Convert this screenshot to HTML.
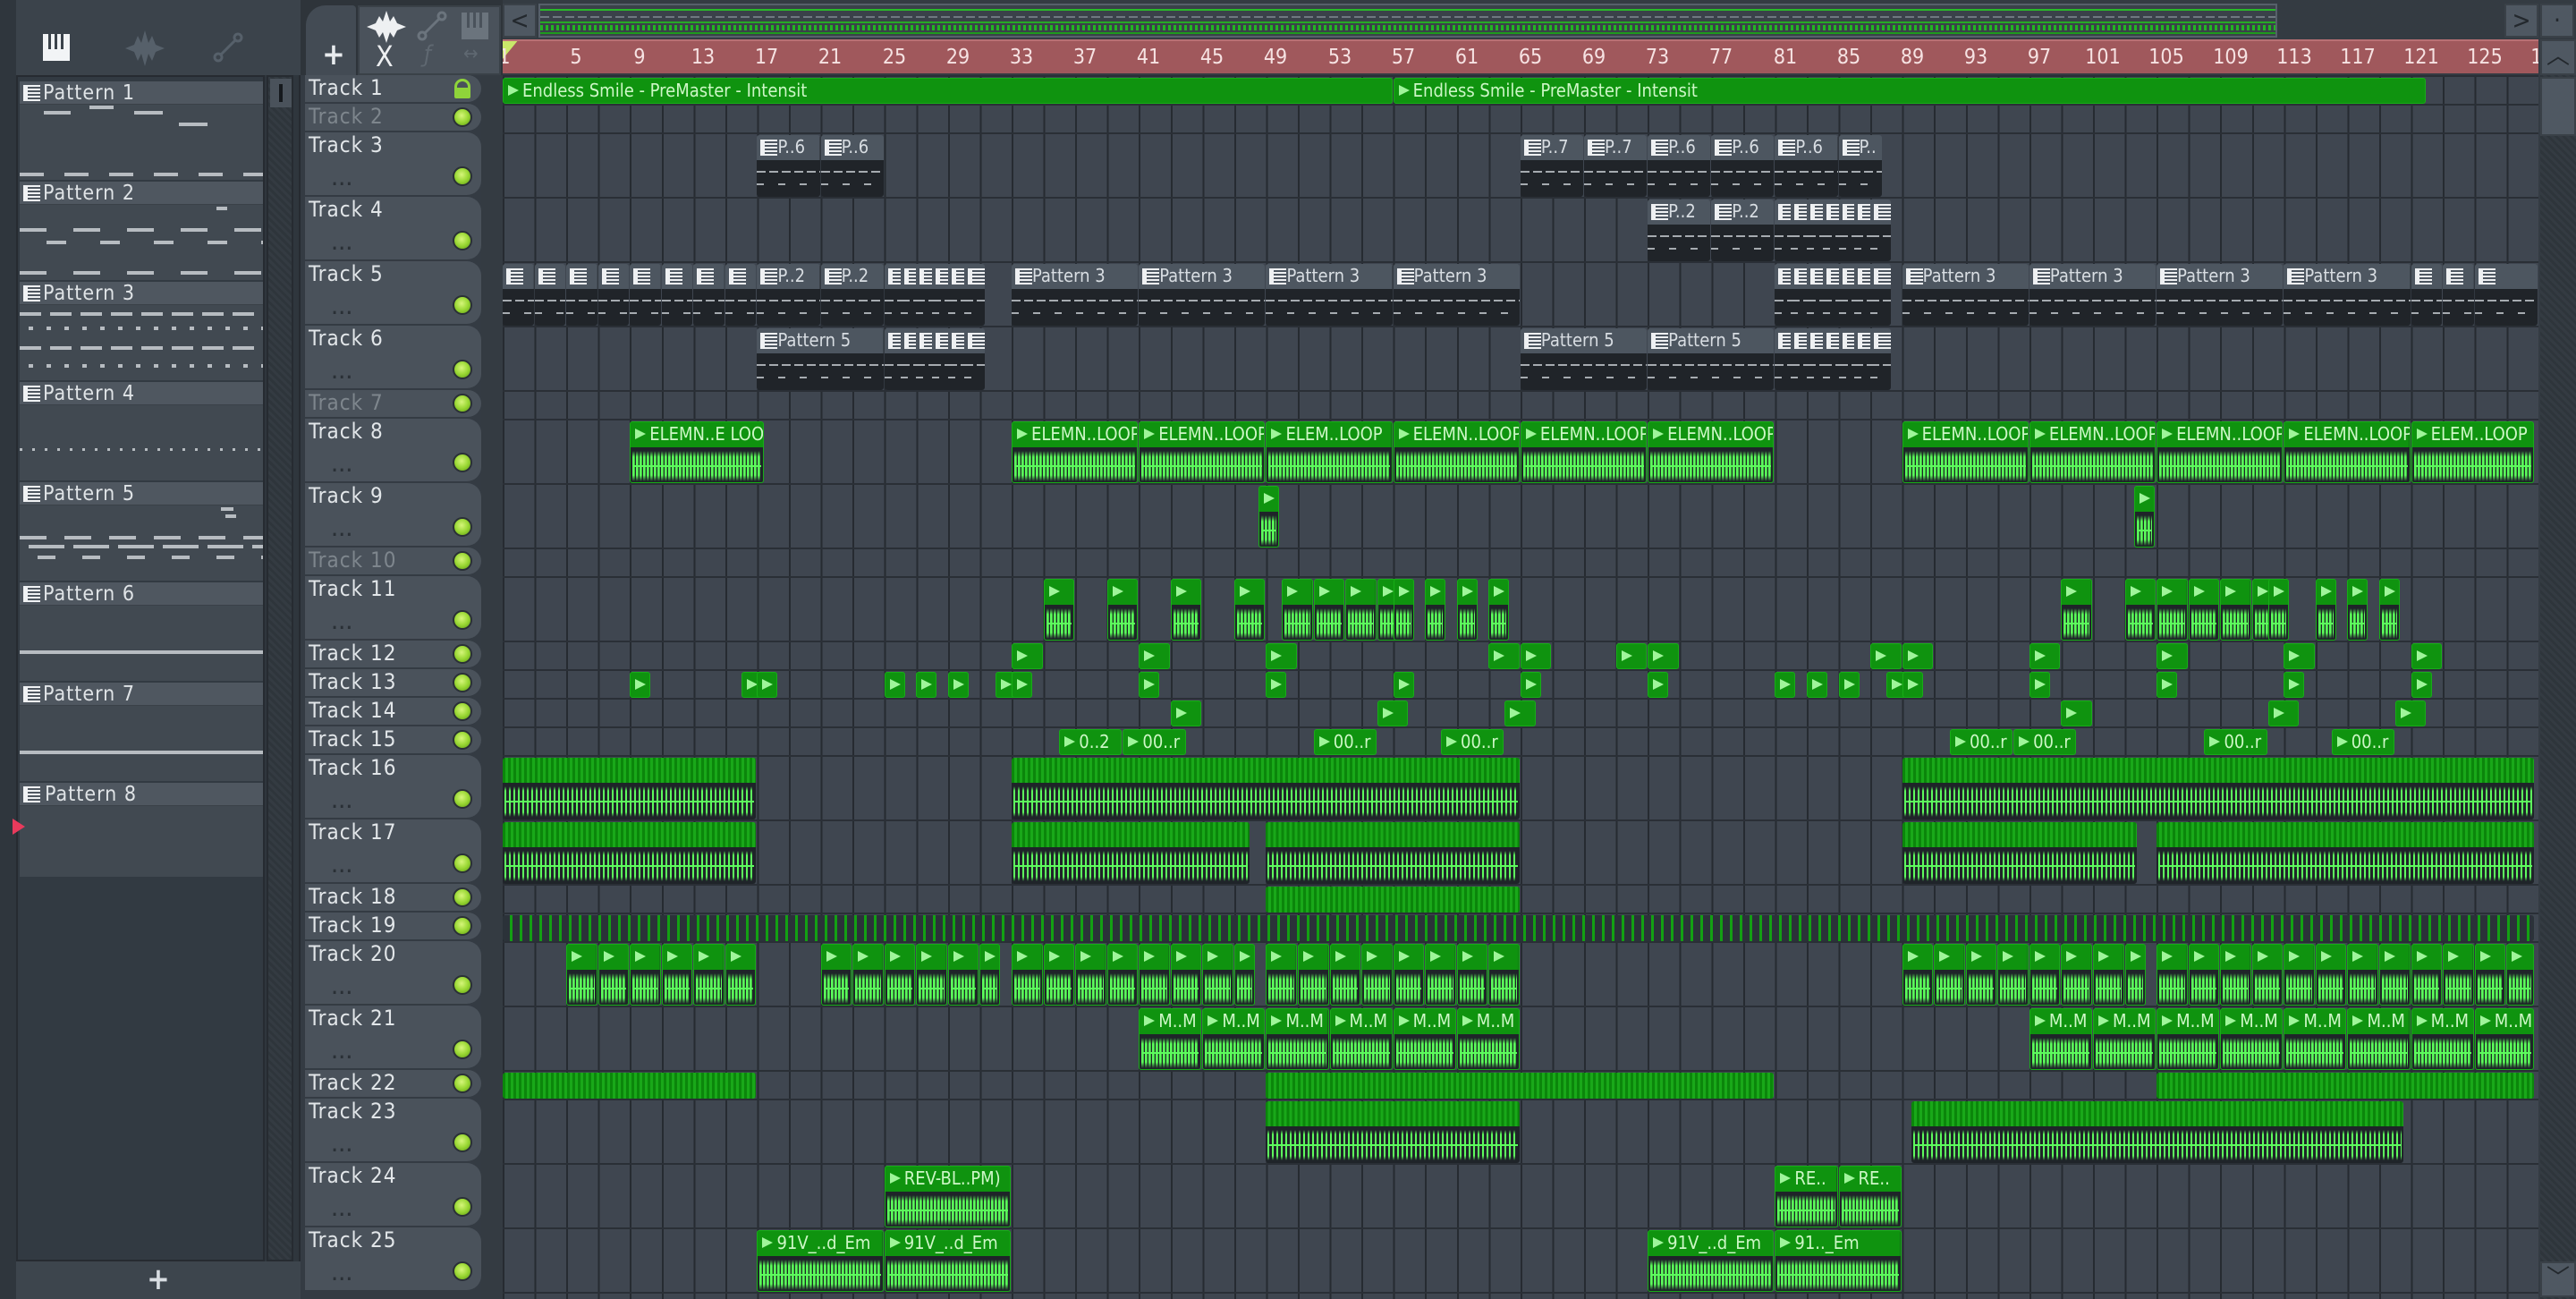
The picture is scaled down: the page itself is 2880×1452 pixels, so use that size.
<!DOCTYPE html>
<html><head><meta charset="utf-8"><style>
*{margin:0;padding:0;box-sizing:border-box}
body{width:2880px;height:1452px;background:#343b43;overflow:hidden;position:relative;font-family:"Liberation Sans Narrow","DejaVu Sans Condensed","Liberation Sans",sans-serif;font-stretch:condensed}
.abs{position:absolute}
#lp{left:0;top:0;width:336px;height:1452px;background:#2f363d;border-right:2px solid #262b31}
#ltb{left:18px;top:0;width:318px;height:84px;background:#3b434b}
#list{left:18px;top:84px;width:278px;height:1326px;background:#323a42;border:2px solid #262b31}
#lsb{left:298px;top:84px;width:30px;height:1326px;background:repeating-linear-gradient(45deg,#2e353b 0 3px,#343b42 3px 6px);border:2px solid #262b31}
#lbot{left:18px;top:1410px;width:318px;height:42px;background:#3d454d;color:#d8dde2;font-size:34px;text-align:center;line-height:40px;font-weight:bold}
.pb{position:absolute;left:22px;width:272px;height:110px;background:#414951}
.ph{position:absolute;left:0;top:0;width:100%;height:26px;background:#4f5760;border-bottom:1px solid #3a4148;color:#dfe3e6;font-size:23px;line-height:26px;padding-left:26px;letter-spacing:1px}
.ph:before{content:"";position:absolute;left:4px;top:4px;width:14px;height:18px;background:repeating-linear-gradient(#f0f2f4 0 2px,#4f5760 2px 4px);border-left:5px solid #f0f2f4}
.dl{position:absolute;height:4px;background:#b7bcc1}
#hdr{left:336px;top:0;width:226px;height:84px;background:#2e343a}
.th{position:absolute;left:341px;width:197px;background:#4a525b;border-radius:0 16px 16px 0;color:#e2e6e9;font-size:24px;line-height:28px;padding-left:4px;letter-spacing:1px}
.th.d{color:#7e868d}
.led{position:absolute;right:10px;width:22px;height:22px;border-radius:50%;background:radial-gradient(circle at 45% 40%,#d6f57a 0,#9ad834 50%,#5d9a12 100%);border:2px solid #2a3036}
.dots{position:absolute;left:30px;bottom:2px;font-size:18px;color:#2a3036;font-weight:bold;letter-spacing:2px}
#strip{left:538px;top:84px;width:24px;height:1368px;background:#343b42}
#g{left:562px;top:84px;width:2276px;height:1368px;overflow:hidden;background:repeating-linear-gradient(90deg,#262b31 0 2px,transparent 2px 35.56px),#3f4650}
.r{position:absolute;left:0;width:100%;border-top:2px solid #2a2f36}
.s{height:32px}.B{height:72px}
.r i{position:absolute;top:1px;left:calc((var(--b) - 1)*17.78px);width:calc(var(--w)*17.78px - 1px);overflow:hidden;white-space:nowrap;font-style:normal;font-size:20px;line-height:27px;border-radius:3px;letter-spacing:0}
.B i{height:69px}.s i{height:29px}
.a{background:linear-gradient(#0f930f,#0f930f) top/100% 28px no-repeat,#1f2429;color:#cdf7c6;padding-left:21px;border:1px solid #17ad17}
.s .a{background:#0f930f}
.a:before{content:"";position:absolute;left:5px;top:7px;width:0;height:0;border-left:12px solid #9ff59a;border-top:6px solid transparent;border-bottom:6px solid transparent}
.B .a:after{content:"";position:absolute;left:2px;right:2px;top:32px;height:34px;background:linear-gradient(#5dfb5d,#5dfb5d) 0 50%/100% 2px no-repeat,repeating-linear-gradient(90deg,#5dfb5d 0 2px,#3fc43f 2px 3px,transparent 3px 4px);-webkit-mask:linear-gradient(transparent 0,#000 20%,#000 80%,transparent 100%)}
.p{background:linear-gradient(#4d5660,#4d5660) top/100% 28px no-repeat,#202429;color:#d8dde2;padding-left:23px}
.s .p{background:#4d5660}
.p:before{content:"";position:absolute;left:4px;top:5px;width:14px;height:18px;background:repeating-linear-gradient(#eef0f2 0 2px,#4d5660 2px 4px);border-left:5px solid #eef0f2}
.B .p:after{content:"";position:absolute;left:0;right:0;top:40px;height:18px;background:repeating-linear-gradient(90deg,#a6abb0 0 10px,transparent 10px 14px) 0 0/100% 2px no-repeat,repeating-linear-gradient(90deg,#a6abb0 0 8px,transparent 8px 24px) 0 14px/100% 2px no-repeat}
.z{background:repeating-linear-gradient(90deg,#0b860b 0 3px,#19a819 3px 6px) top/100% 28px no-repeat,#1f2429}
.s .z{background:repeating-linear-gradient(90deg,#0b860b 0 3px,#19a819 3px 6px)}
.B .z:after{content:"";position:absolute;left:2px;right:2px;top:32px;height:34px;background:linear-gradient(#5dfb5d,#5dfb5d) 0 50%/100% 2px no-repeat,repeating-linear-gradient(90deg,#5dfb5d 0 2px,transparent 2px 5px);-webkit-mask:linear-gradient(transparent 0,#000 15%,#000 85%,transparent 100%)}
.y{background:repeating-linear-gradient(90deg,transparent 0 8px,#13a013 8px 11px),#2b3239 !important}
#ruler{left:562px;top:44px;width:2276px;height:38px;background:#a0585c;border-top:2px solid #b87074;color:#f6e2e2;font-size:23px;line-height:36px;overflow:hidden}
#ruler span{position:absolute;top:0;width:40px;text-align:center}
#top{left:562px;top:0;width:2318px;height:44px;background:#343b42}
.btn{position:absolute;background:#4f5862;border:2px solid #3a4148;color:#23282d;font-size:28px;text-align:center;line-height:34px}
#vsb{left:2840px;top:44px;width:40px;height:1408px;background:repeating-linear-gradient(45deg,#2e353b 0 3px,#343b42 3px 6px)}
</style></head><body>
<div id="lp" class="abs"></div>
<div id="ltb" class="abs">
 <svg class="abs" style="left:30px;top:38px" width="30" height="30"><rect x="0" y="0" width="30" height="30" fill="#f2f4f6"/><rect x="6" y="0" width="3" height="17" fill="#3b434b"/><rect x="13" y="0" width="3" height="17" fill="#3b434b"/><rect x="20" y="0" width="3" height="17" fill="#3b434b"/></svg>
 <svg class="abs" style="left:122px;top:34px" width="44" height="40"><path d="M0 20 L10 16 L14 6 L18 14 L22 0 L26 14 L30 6 L34 16 L44 20 L34 24 L30 34 L26 26 L22 40 L18 26 L14 34 L10 24 Z" fill="#56606a"/></svg>
 <svg class="abs" style="left:220px;top:36px" width="34" height="34"><circle cx="6" cy="28" r="4" fill="none" stroke="#56606a" stroke-width="3"/><circle cx="28" cy="6" r="4" fill="none" stroke="#56606a" stroke-width="3"/><line x1="9" y1="25" x2="25" y2="9" stroke="#56606a" stroke-width="3"/></svg>
</div>
<div id="list" class="abs"></div>
<div id="lsb" class="abs"><div class="abs" style="left:2px;top:2px;width:24px;height:32px;background:#4a525b;"><div class="abs" style="left:10px;top:6px;width:4px;height:20px;background:#15191d"></div></div></div>

<div class="pb" style="top:91px"><div class="ph">Pattern 1</div>
 <div class="dl" style="left:27px;top:33px;width:30px"></div><div class="dl" style="left:78px;top:27px;width:27px"></div><div class="dl" style="left:128px;top:33px;width:32px"></div><div class="dl" style="left:178px;top:46px;width:32px"></div>
 <div class="dl" style="left:0;top:102px;width:272px;background:repeating-linear-gradient(90deg,#b7bcc1 0 27px,transparent 27px 50px)"></div></div>
<div class="pb" style="top:203px"><div class="ph">Pattern 2</div>
 <div class="dl" style="left:220px;top:28px;width:12px"></div><div class="dl" style="left:0;top:52px;width:272px;background:repeating-linear-gradient(90deg,#b7bcc1 0 30px,transparent 30px 60px)"></div>
 <div class="dl" style="left:30px;top:66px;width:242px;background:repeating-linear-gradient(90deg,#b7bcc1 0 22px,transparent 22px 60px)"></div>
 <div class="dl" style="left:0;top:100px;width:272px;background:repeating-linear-gradient(90deg,#b7bcc1 0 30px,transparent 30px 60px)"></div></div>
<div class="pb" style="top:315px"><div class="ph">Pattern 3</div>
 <div class="dl" style="left:0;top:34px;width:272px;background:repeating-linear-gradient(90deg,#b7bcc1 0 24px,transparent 24px 34px)"></div>
 <div class="dl" style="left:10px;top:50px;width:262px;background:repeating-linear-gradient(90deg,#b7bcc1 0 5px,transparent 5px 20px)"></div>
 <div class="dl" style="left:0;top:72px;width:272px;background:repeating-linear-gradient(90deg,#b7bcc1 0 24px,transparent 24px 34px)"></div>
 <div class="dl" style="left:10px;top:92px;width:262px;background:repeating-linear-gradient(90deg,#b7bcc1 0 5px,transparent 5px 20px)"></div></div>
<div class="pb" style="top:427px"><div class="ph">Pattern 4</div>
 <div class="dl" style="left:0;top:74px;width:272px;height:3px;background:repeating-linear-gradient(90deg,#b7bcc1 0 3px,transparent 3px 14px)"></div></div>
<div class="pb" style="top:539px"><div class="ph">Pattern 5</div>
 <div class="dl" style="left:225px;top:28px;width:14px"></div><div class="dl" style="left:230px;top:36px;width:12px"></div>
 <div class="dl" style="left:0;top:60px;width:272px;background:repeating-linear-gradient(90deg,#b7bcc1 0 30px,transparent 30px 50px)"></div>
 <div class="dl" style="left:10px;top:70px;width:262px;background:repeating-linear-gradient(90deg,#b7bcc1 0 40px,transparent 40px 50px)"></div>
 <div class="dl" style="left:20px;top:82px;width:252px;background:repeating-linear-gradient(90deg,#b7bcc1 0 20px,transparent 20px 50px)"></div></div>
<div class="pb" style="top:651px"><div class="ph">Pattern 6</div><div class="dl" style="left:0;top:76px;width:272px"></div></div>
<div class="pb" style="top:763px"><div class="ph">Pattern 7</div><div class="dl" style="left:0;top:76px;width:272px"></div></div>
<div class="pb" style="top:875px;height:105px"><div class="ph" style="padding-left:28px">Pattern 8</div><div class="abs" style="left:-8px;top:40px;width:0;height:0;border-left:14px solid #e83a5c;border-top:9px solid transparent;border-bottom:9px solid transparent"></div></div>
<div id="lbot" class="abs">+</div>

<div id="hdr" class="abs">
 <div class="abs" style="left:6px;top:6px;width:56px;height:78px;background:#434b54;border-radius:22px 4px 0 0"></div>
 <div class="abs" style="left:12px;top:44px;width:50px;text-align:center;color:#e8ebee;font-size:34px;font-weight:bold;line-height:34px">+</div>
 <div class="abs" style="left:64px;top:6px;width:160px;height:78px;background:#4a525b;border:2px solid #3a4148"></div>
 <svg class="abs" style="left:74px;top:12px" width="44" height="36"><path d="M0 18 L10 14 L14 6 L18 12 L22 0 L26 12 L30 6 L34 14 L44 18 L34 22 L30 30 L26 24 L22 36 L18 24 L14 30 L10 22 Z" fill="#eef0f2"/></svg>
 <svg class="abs" style="left:130px;top:12px" width="34" height="34"><circle cx="6" cy="28" r="4" fill="none" stroke="#6b747d" stroke-width="3"/><circle cx="28" cy="6" r="4" fill="none" stroke="#6b747d" stroke-width="3"/><line x1="9" y1="25" x2="25" y2="9" stroke="#6b747d" stroke-width="3"/></svg>
 <svg class="abs" style="left:180px;top:14px" width="30" height="30"><rect width="30" height="30" fill="#6b747d"/><rect x="6" width="3" height="17" fill="#4a525b"/><rect x="13" width="3" height="17" fill="#4a525b"/><rect x="20" width="3" height="17" fill="#4a525b"/></svg>
 <div class="abs" style="left:84px;top:46px;color:#eef0f2;font-size:32px;line-height:34px">X</div>
 <div class="abs" style="left:138px;top:46px;color:#5f6871;font-size:26px;font-style:italic">ƒ</div>
 <div class="abs" style="left:182px;top:48px;color:#5f6871;font-size:22px">↔</div>
</div>

<div id="top" class="abs">
 <div class="btn" style="left:0;top:4px;width:38px;height:38px">&lt;</div>
 <div class="abs" style="left:40px;top:4px;width:1944px;height:38px;background:#3a4149;border:2px solid #56606a">
  <div class="abs" style="left:0;top:4px;width:100%;height:2px;background:#29b929"></div>
  <div class="abs" style="left:0;top:12px;width:100%;height:2px;background:repeating-linear-gradient(90deg,#6f7880 0 10px,transparent 10px 14px)"></div>
  <div class="abs" style="left:0;top:18px;width:100%;height:2px;background:#26a826"></div>
  <div class="abs" style="left:0;top:22px;width:100%;height:6px;background:repeating-linear-gradient(90deg,#22b522 0 3px,transparent 3px 6px)"></div>
  <div class="abs" style="left:0;top:30px;width:100%;height:2px;background:#1e9a1e"></div>
 </div>
 <div class="btn" style="left:2238px;top:4px;width:38px;height:38px">&gt;</div>
 <div class="btn" style="left:2278px;top:4px;width:38px;height:38px">·</div>
</div>

<div id="ruler" class="abs">
 <div class="abs" style="left:0;top:-2px;width:0;height:0;border-left:18px solid #c9e86a;border-bottom:22px solid transparent"></div>
 <span style="left:-18px">1</span><span style="left:62px">5</span><span style="left:133px">9</span><span style="left:204px">13</span><span style="left:275px">17</span><span style="left:346px">21</span><span style="left:418px">25</span><span style="left:489px">29</span><span style="left:560px">33</span><span style="left:631px">37</span><span style="left:702px">41</span><span style="left:773px">45</span><span style="left:844px">49</span><span style="left:916px">53</span><span style="left:987px">57</span><span style="left:1058px">61</span><span style="left:1129px">65</span><span style="left:1200px">69</span><span style="left:1271px">73</span><span style="left:1342px">77</span><span style="left:1414px">81</span><span style="left:1485px">85</span><span style="left:1556px">89</span><span style="left:1627px">93</span><span style="left:1698px">97</span><span style="left:1769px">101</span><span style="left:1840px">105</span><span style="left:1912px">109</span><span style="left:1983px">113</span><span style="left:2054px">117</span><span style="left:2125px">121</span><span style="left:2196px">125</span><span style="left:2267px">129</span>
</div>

<div id="vsb" class="abs">
 <div class="btn" style="left:0;top:0;width:40px;height:40px;font-size:26px">︿</div>
 <div class="abs" style="left:0;top:42px;width:40px;height:66px;background:#4f5862;border:2px solid #3a4148"></div>
 <div class="btn" style="left:0;top:1366px;width:40px;height:40px;font-size:26px">﹀</div>
</div>

<div id="strip" class="abs"></div>

<div class="th" style="top:84px;height:30px">Track 1<span class="abs" style="right:12px;top:4px;width:18px;height:22px;border:3px solid #8fd43a;border-bottom:12px solid #8fd43a;border-radius:9px 9px 2px 2px"></span></div>
<div class="th d" style="top:116px;height:30px">Track 2<div class="led" style="top:4px"></div></div>
<div class="th" style="top:148px;height:70px">Track 3<div class="dots">...</div><div class="led" style="top:38px"></div></div>
<div class="th" style="top:220px;height:70px">Track 4<div class="dots">...</div><div class="led" style="top:38px"></div></div>
<div class="th" style="top:292px;height:70px">Track 5<div class="dots">...</div><div class="led" style="top:38px"></div></div>
<div class="th" style="top:364px;height:70px">Track 6<div class="dots">...</div><div class="led" style="top:38px"></div></div>
<div class="th d" style="top:436px;height:30px">Track 7<div class="led" style="top:4px"></div></div>
<div class="th" style="top:468px;height:70px">Track 8<div class="dots">...</div><div class="led" style="top:38px"></div></div>
<div class="th" style="top:540px;height:70px">Track 9<div class="dots">...</div><div class="led" style="top:38px"></div></div>
<div class="th d" style="top:612px;height:30px">Track 10<div class="led" style="top:4px"></div></div>
<div class="th" style="top:644px;height:70px">Track 11<div class="dots">...</div><div class="led" style="top:38px"></div></div>
<div class="th" style="top:716px;height:30px">Track 12<div class="led" style="top:4px"></div></div>
<div class="th" style="top:748px;height:30px">Track 13<div class="led" style="top:4px"></div></div>
<div class="th" style="top:780px;height:30px">Track 14<div class="led" style="top:4px"></div></div>
<div class="th" style="top:812px;height:30px">Track 15<div class="led" style="top:4px"></div></div>
<div class="th" style="top:844px;height:70px">Track 16<div class="dots">...</div><div class="led" style="top:38px"></div></div>
<div class="th" style="top:916px;height:70px">Track 17<div class="dots">...</div><div class="led" style="top:38px"></div></div>
<div class="th" style="top:988px;height:30px">Track 18<div class="led" style="top:4px"></div></div>
<div class="th" style="top:1020px;height:30px">Track 19<div class="led" style="top:4px"></div></div>
<div class="th" style="top:1052px;height:70px">Track 20<div class="dots">...</div><div class="led" style="top:38px"></div></div>
<div class="th" style="top:1124px;height:70px">Track 21<div class="dots">...</div><div class="led" style="top:38px"></div></div>
<div class="th" style="top:1196px;height:30px">Track 22<div class="led" style="top:4px"></div></div>
<div class="th" style="top:1228px;height:70px">Track 23<div class="dots">...</div><div class="led" style="top:38px"></div></div>
<div class="th" style="top:1300px;height:70px">Track 24<div class="dots">...</div><div class="led" style="top:38px"></div></div>
<div class="th" style="top:1372px;height:70px">Track 25<div class="dots">...</div><div class="led" style="top:38px"></div></div>

<div id="g" class="abs">
<div class="r s" style="top:0"><i class="a" style="--b:1;--w:56">Endless Smile - PreMaster - Intensit</i><i class="a" style="--b:57;--w:65">Endless Smile - PreMaster - Intensit</i></div>
<div class="r s" style="top:32px"></div>
<div class="r B" style="top:64px"><i class="p" style="--b:17;--w:4">P..6</i><i class="p" style="--b:21;--w:4">P..6</i><i class="p" style="--b:65;--w:4">P..7</i><i class="p" style="--b:69;--w:4">P..7</i><i class="p" style="--b:73;--w:4">P..6</i><i class="p" style="--b:77;--w:4">P..6</i><i class="p" style="--b:81;--w:4">P..6</i><i class="p" style="--b:85;--w:2.8">P..</i></div>
<div class="r B" style="top:136px"><i class="p" style="--b:73;--w:4">P..2</i><i class="p" style="--b:77;--w:4">P..2</i><i class="p" style="--b:81;--w:1"></i><i class="p" style="--b:82;--w:1"></i><i class="p" style="--b:83;--w:1"></i><i class="p" style="--b:84;--w:1"></i><i class="p" style="--b:85;--w:1"></i><i class="p" style="--b:86;--w:1"></i><i class="p" style="--b:87;--w:0.8"></i></div>
<div class="r B" style="top:208px"><i class="p" style="--b:1;--w:2"></i><i class="p" style="--b:3;--w:2"></i><i class="p" style="--b:5;--w:2"></i><i class="p" style="--b:7;--w:2"></i><i class="p" style="--b:9;--w:2"></i><i class="p" style="--b:11;--w:2"></i><i class="p" style="--b:13;--w:2"></i><i class="p" style="--b:15;--w:2"></i><i class="p" style="--b:17;--w:4">P..2</i><i class="p" style="--b:21;--w:4">P..2</i><i class="p" style="--b:25;--w:1"></i><i class="p" style="--b:26;--w:1"></i><i class="p" style="--b:27;--w:1"></i><i class="p" style="--b:28;--w:1"></i><i class="p" style="--b:29;--w:1"></i><i class="p" style="--b:30;--w:1"></i><i class="p" style="--b:33;--w:8">Pattern 3</i><i class="p" style="--b:41;--w:8">Pattern 3</i><i class="p" style="--b:49;--w:8">Pattern 3</i><i class="p" style="--b:57;--w:8">Pattern 3</i><i class="p" style="--b:81;--w:1"></i><i class="p" style="--b:82;--w:1"></i><i class="p" style="--b:83;--w:1"></i><i class="p" style="--b:84;--w:1"></i><i class="p" style="--b:85;--w:1"></i><i class="p" style="--b:86;--w:1"></i><i class="p" style="--b:87;--w:0.8"></i><i class="p" style="--b:89;--w:8">Pattern 3</i><i class="p" style="--b:97;--w:8">Pattern 3</i><i class="p" style="--b:105;--w:8">Pattern 3</i><i class="p" style="--b:113;--w:8">Pattern 3</i><i class="p" style="--b:121;--w:2"></i><i class="p" style="--b:123;--w:2"></i><i class="p" style="--b:125;--w:4"></i></div>
<div class="r B" style="top:280px"><i class="p" style="--b:17;--w:8">Pattern 5</i><i class="p" style="--b:25;--w:1"></i><i class="p" style="--b:26;--w:1"></i><i class="p" style="--b:27;--w:1"></i><i class="p" style="--b:28;--w:1"></i><i class="p" style="--b:29;--w:1"></i><i class="p" style="--b:30;--w:1"></i><i class="p" style="--b:65;--w:8">Pattern 5</i><i class="p" style="--b:73;--w:8">Pattern 5</i><i class="p" style="--b:81;--w:1"></i><i class="p" style="--b:82;--w:1"></i><i class="p" style="--b:83;--w:1"></i><i class="p" style="--b:84;--w:1"></i><i class="p" style="--b:85;--w:1"></i><i class="p" style="--b:86;--w:1"></i><i class="p" style="--b:87;--w:0.8"></i></div>
<div class="r s" style="top:352px"></div>
<div class="r B" style="top:384px"><i class="a" style="--b:9;--w:8.5">ELEMN..E LOOP</i><i class="a" style="--b:33;--w:8">ELEMN..LOOP</i><i class="a" style="--b:41;--w:8">ELEMN..LOOP</i><i class="a" style="--b:49;--w:8">ELEM..LOOP</i><i class="a" style="--b:57;--w:8">ELEMN..LOOP</i><i class="a" style="--b:65;--w:8">ELEMN..LOOP</i><i class="a" style="--b:73;--w:8">ELEMN..LOOP</i><i class="a" style="--b:89;--w:8">ELEMN..LOOP</i><i class="a" style="--b:97;--w:8">ELEMN..LOOP</i><i class="a" style="--b:105;--w:8">ELEMN..LOOP</i><i class="a" style="--b:113;--w:8">ELEMN..LOOP</i><i class="a" style="--b:121;--w:7.8">ELEM..LOOP</i></div>
<div class="r B" style="top:456px"><i class="a" style="--b:48.5;--w:1"></i><i class="a" style="--b:103.6;--w:1"></i></div>
<div class="r s" style="top:528px"></div>
<div class="r B" style="top:560px"><i class="a" style="--b:35;--w:2"></i><i class="a" style="--b:39;--w:2"></i><i class="a" style="--b:43;--w:2"></i><i class="a" style="--b:47;--w:2"></i><i class="a" style="--b:50;--w:2"></i><i class="a" style="--b:52;--w:2"></i><i class="a" style="--b:54;--w:2"></i><i class="a" style="--b:56;--w:1"></i><i class="a" style="--b:57;--w:1"></i><i class="a" style="--b:59;--w:1"></i><i class="a" style="--b:61;--w:1"></i><i class="a" style="--b:63;--w:1"></i><i class="a" style="--b:99;--w:2"></i><i class="a" style="--b:103;--w:2"></i><i class="a" style="--b:105;--w:2"></i><i class="a" style="--b:107;--w:2"></i><i class="a" style="--b:109;--w:2"></i><i class="a" style="--b:111;--w:1"></i><i class="a" style="--b:112;--w:1"></i><i class="a" style="--b:115;--w:1"></i><i class="a" style="--b:117;--w:1"></i><i class="a" style="--b:119;--w:1"></i></div>
<div class="r s" style="top:632px"><i class="a" style="--b:33;--w:2"></i><i class="a" style="--b:41;--w:2"></i><i class="a" style="--b:49;--w:2"></i><i class="a" style="--b:63;--w:2"></i><i class="a" style="--b:65;--w:2"></i><i class="a" style="--b:71;--w:2"></i><i class="a" style="--b:73;--w:2"></i><i class="a" style="--b:87;--w:2"></i><i class="a" style="--b:89;--w:2"></i><i class="a" style="--b:97;--w:2"></i><i class="a" style="--b:105;--w:2"></i><i class="a" style="--b:113;--w:2"></i><i class="a" style="--b:121;--w:2"></i></div>
<div class="r s" style="top:664px"><i class="a" style="--b:9;--w:1"></i><i class="a" style="--b:16;--w:1"></i><i class="a" style="--b:17;--w:1"></i><i class="a" style="--b:25;--w:1"></i><i class="a" style="--b:27;--w:1"></i><i class="a" style="--b:29;--w:1"></i><i class="a" style="--b:32;--w:1"></i><i class="a" style="--b:33;--w:1"></i><i class="a" style="--b:41;--w:1"></i><i class="a" style="--b:49;--w:1"></i><i class="a" style="--b:57;--w:1"></i><i class="a" style="--b:65;--w:1"></i><i class="a" style="--b:73;--w:1"></i><i class="a" style="--b:81;--w:1"></i><i class="a" style="--b:83;--w:1"></i><i class="a" style="--b:85;--w:1"></i><i class="a" style="--b:88;--w:1"></i><i class="a" style="--b:89;--w:1"></i><i class="a" style="--b:97;--w:1"></i><i class="a" style="--b:105;--w:1"></i><i class="a" style="--b:113;--w:1"></i><i class="a" style="--b:121;--w:1"></i></div>
<div class="r s" style="top:696px"><i class="a" style="--b:43;--w:2"></i><i class="a" style="--b:56;--w:2"></i><i class="a" style="--b:64;--w:2"></i><i class="a" style="--b:99;--w:2"></i><i class="a" style="--b:112;--w:2"></i><i class="a" style="--b:120;--w:2"></i></div>
<div class="r s" style="top:728px"><i class="a" style="--b:36;--w:4">0..2</i><i class="a" style="--b:40;--w:4">00..r</i><i class="a" style="--b:52;--w:4">00..r</i><i class="a" style="--b:60;--w:4">00..r</i><i class="a" style="--b:92;--w:4">00..r</i><i class="a" style="--b:96;--w:4">00..r</i><i class="a" style="--b:108;--w:4">00..r</i><i class="a" style="--b:116;--w:4">00..r</i></div>
<div class="r B" style="top:760px"><i class="z" style="--b:1;--w:16"></i><i class="z" style="--b:33;--w:32"></i><i class="z" style="--b:89;--w:39.8"></i></div>
<div class="r B" style="top:832px"><i class="z" style="--b:1;--w:16"></i><i class="z" style="--b:33;--w:15"></i><i class="z" style="--b:49;--w:16"></i><i class="z" style="--b:89;--w:14.8"></i><i class="z" style="--b:105;--w:23.8"></i></div>
<div class="r s" style="top:904px"><i class="z" style="--b:49;--w:16"></i></div>
<div class="r s" style="top:936px"><i class="z y" style="--b:1;--w:127.8"></i></div>
<div class="r B" style="top:968px"><i class="a" style="--b:5;--w:2"></i><i class="a" style="--b:7;--w:2"></i><i class="a" style="--b:9;--w:2"></i><i class="a" style="--b:11;--w:2"></i><i class="a" style="--b:13;--w:2"></i><i class="a" style="--b:15;--w:2"></i><i class="a" style="--b:21;--w:2"></i><i class="a" style="--b:23;--w:2"></i><i class="a" style="--b:25;--w:2"></i><i class="a" style="--b:27;--w:2"></i><i class="a" style="--b:29;--w:2"></i><i class="a" style="--b:31;--w:1"></i><i class="a" style="--b:33;--w:2"></i><i class="a" style="--b:35;--w:2"></i><i class="a" style="--b:37;--w:2"></i><i class="a" style="--b:39;--w:2"></i><i class="a" style="--b:41;--w:2"></i><i class="a" style="--b:43;--w:2"></i><i class="a" style="--b:45;--w:2"></i><i class="a" style="--b:47;--w:1"></i><i class="a" style="--b:49;--w:2"></i><i class="a" style="--b:51;--w:2"></i><i class="a" style="--b:53;--w:2"></i><i class="a" style="--b:55;--w:2"></i><i class="a" style="--b:57;--w:2"></i><i class="a" style="--b:59;--w:2"></i><i class="a" style="--b:61;--w:2"></i><i class="a" style="--b:63;--w:2"></i><i class="a" style="--b:89;--w:2"></i><i class="a" style="--b:91;--w:2"></i><i class="a" style="--b:93;--w:2"></i><i class="a" style="--b:95;--w:2"></i><i class="a" style="--b:97;--w:2"></i><i class="a" style="--b:99;--w:2"></i><i class="a" style="--b:101;--w:2"></i><i class="a" style="--b:103;--w:1"></i><i class="a" style="--b:105;--w:2"></i><i class="a" style="--b:107;--w:2"></i><i class="a" style="--b:109;--w:2"></i><i class="a" style="--b:111;--w:2"></i><i class="a" style="--b:113;--w:2"></i><i class="a" style="--b:115;--w:2"></i><i class="a" style="--b:117;--w:2"></i><i class="a" style="--b:119;--w:2"></i><i class="a" style="--b:121;--w:2"></i><i class="a" style="--b:123;--w:2"></i><i class="a" style="--b:125;--w:2"></i><i class="a" style="--b:127;--w:1.8"></i></div>
<div class="r B" style="top:1040px"><i class="a" style="--b:41;--w:4">M..M</i><i class="a" style="--b:45;--w:4">M..M</i><i class="a" style="--b:49;--w:4">M..M</i><i class="a" style="--b:53;--w:4">M..M</i><i class="a" style="--b:57;--w:4">M..M</i><i class="a" style="--b:61;--w:4">M..M</i><i class="a" style="--b:97;--w:4">M..M</i><i class="a" style="--b:101;--w:4">M..M</i><i class="a" style="--b:105;--w:4">M..M</i><i class="a" style="--b:109;--w:4">M..M</i><i class="a" style="--b:113;--w:4">M..M</i><i class="a" style="--b:117;--w:4">M..M</i><i class="a" style="--b:121;--w:4">M..M</i><i class="a" style="--b:125;--w:3.8">M..M</i></div>
<div class="r s" style="top:1112px"><i class="z" style="--b:1;--w:16"></i><i class="z" style="--b:49;--w:32"></i><i class="z" style="--b:105;--w:23.8"></i></div>
<div class="r B" style="top:1144px"><i class="z" style="--b:49;--w:16"></i><i class="z" style="--b:89.6;--w:31"></i></div>
<div class="r B" style="top:1216px"><i class="a" style="--b:25;--w:8">REV-BL..PM)</i><i class="a" style="--b:81;--w:4">RE..</i><i class="a" style="--b:85;--w:4">RE..</i></div>
<div class="r B" style="top:1288px"><i class="a" style="--b:17;--w:8">91V_..d_Em</i><i class="a" style="--b:25;--w:8">91V_..d_Em</i><i class="a" style="--b:73;--w:8">91V_..d_Em</i><i class="a" style="--b:81;--w:8">91.._Em</i></div>
<div class="r s" style="top:1360px"></div>
</div>
</body></html>
